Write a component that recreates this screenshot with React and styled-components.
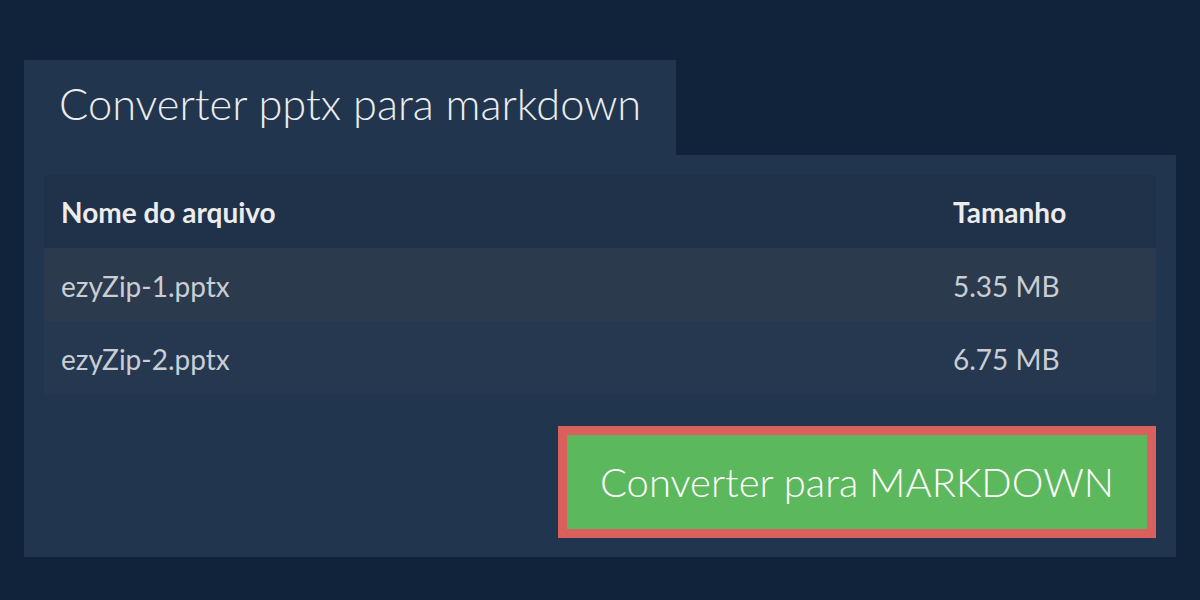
import styled, { createGlobalStyle } from "styled-components";

const GlobalStyle = createGlobalStyle`
  html, body {
    margin: 0;
    padding: 0;
    background: #11233a;
    font-family: Lato, "Open Sans", sans-serif;
  }
`;

const files = [
  { name: "ezyZip-1.pptx", size: "5.35 MB" },
  { name: "ezyZip-2.pptx", size: "6.75 MB" },
];

const App = () => {
  return (
    <>
      <GlobalStyle />
      <Page>
        <Tab>Converter pptx para markdown</Tab>
        <Panel>
          <Table>
            <thead>
              <tr>
                <Th>Nome do arquivo</Th>
                <Th $narrow>Tamanho</Th>
              </tr>
            </thead>
            <tbody>
              {files.map((f, i) => (
                <Row key={f.name} $odd={i % 2 === 0}>
                  <Td>{f.name}</Td>
                  <Td $narrow>{f.size}</Td>
                </Row>
              ))}
            </tbody>
          </Table>
          <Actions>
            <ConvertBtn>Converter para MARKDOWN</ConvertBtn>
          </Actions>
        </Panel>
      </Page>
    </>
  );
};

export default App;

const Page = styled.div`
  width: 1200px;
  height: 600px;
  box-sizing: border-box;
  padding: 60px 24px 0;
  display: flex;
  flex-direction: column;
  align-items: flex-start;
`;

const Tab = styled.div`
  width: 652px;
  height: 95px;
  box-sizing: border-box;
  padding: 0 0 10px 35px;
  display: flex;
  align-items: center;
  background: #21354f;
  color: #ececec;
  font-size: 43.4px;
  font-weight: 300;
  white-space: nowrap;
`;

const Panel = styled.div`
  align-self: stretch;
  background: #21354f;
  padding: 20px 20px 19px;
  display: flex;
  flex-direction: column;
`;

const Table = styled.table`
  width: 100%;
  border-collapse: collapse;
  font-size: 28px;
  line-height: 1;
`;

const Th = styled.th`
  text-align: left;
  font-weight: 700;
  color: #ececec;
  background: #1f3249;
  height: 73px;
  padding: 0 17px;
  width: ${(p) => (p.$narrow ? "186px" : "auto")};
`;

const Row = styled.tr`
  background: ${(p) => (p.$odd ? "#2b3a4c" : "#253850")};
`;

const Td = styled.td`
  color: #c9ced4;
  height: 71px;
  padding: 2px 17px 0;
  width: ${(p) => (p.$narrow ? "186px" : "auto")};
`;

const Actions = styled.div`
  display: flex;
  justify-content: flex-end;
  margin-top: 32px;
`;

const ConvertBtn = styled.button`
  width: 598px;
  height: 112px;
  box-sizing: border-box;
  border: 9px solid #d9605c;
  background: #5cb85c;
  color: #ffffff;
  font-family: Lato, "Open Sans", sans-serif;
  font-size: 40px;
  font-weight: 300;
  padding: 0;
  cursor: pointer;
`;
